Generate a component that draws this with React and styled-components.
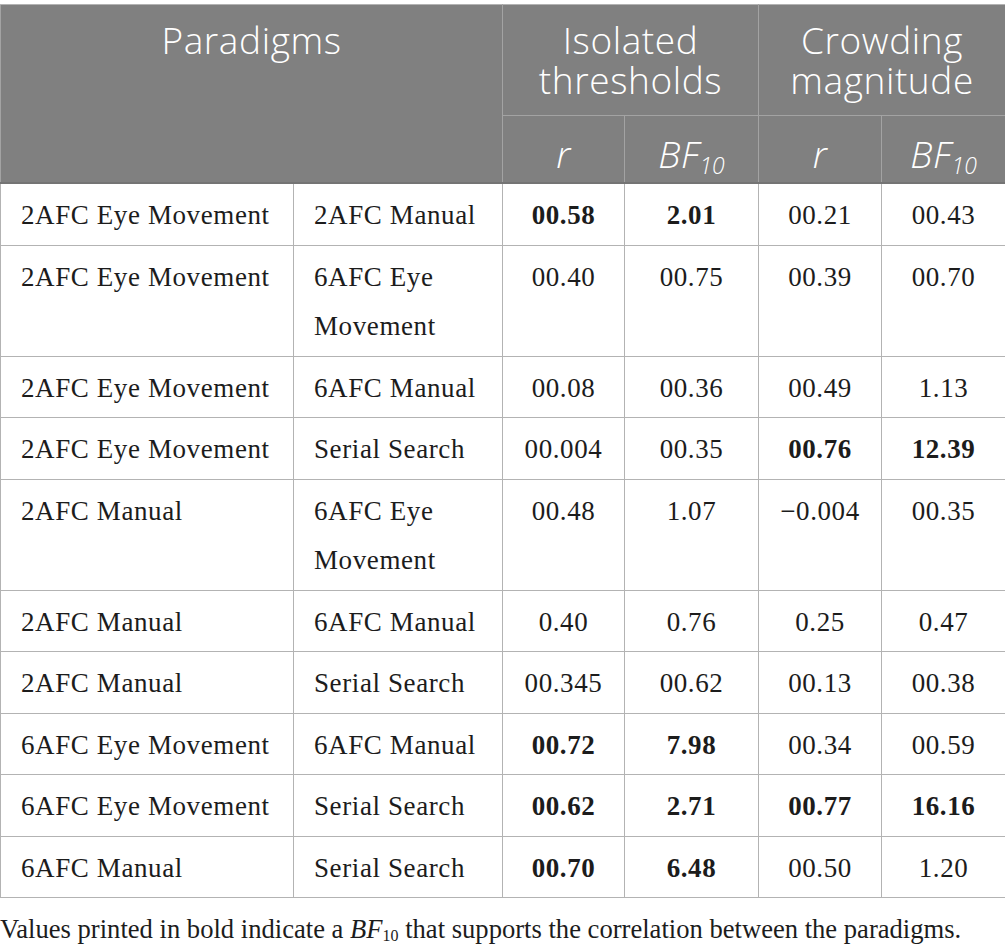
import React from "react";
import styled, { createGlobalStyle } from "styled-components";

const Global = createGlobalStyle`
  html, body { margin: 0; padding: 0; background: #ffffff; }
  body { font-family: "Liberation Serif", "Times New Roman", serif; color: #1c1c1c; }
`;

const Page = styled.div`
  padding-top: 4px;
  width: 1005px;
`;

const Table = styled.table`
  border-collapse: collapse;
  table-layout: fixed;
  width: 1005px;
  border: 1px solid #b3b3b3;
`;

const HeadCell = styled.th`
  background: #808080;
  color: #ffffff;
  font-family: "Open Sans", "Noto Sans", sans-serif;
  font-weight: 300;
  font-size: 37px;
  letter-spacing: 0.6px;
  line-height: 40px;
  text-align: center;
  vertical-align: top;
  padding: ${(p) => (p.$sub ? "18px 6px 8px" : "15px 6px 15px")};
  border: 1px solid #a3a3a3;
  border-top-color: #b3b3b3;
  font-style: ${(p) => (p.$sub ? "italic" : "normal")};
  border-bottom: ${(p) => (p.$last ? "2px solid #747474" : "1px solid #a3a3a3")};
`;

const Sub = styled.sub`
  font-size: 0.62em;
  vertical-align: baseline;
  position: relative;
  top: 0.28em;
  line-height: 0;
  letter-spacing: 0;
`;

const Cell = styled.td`
  font-size: 27px;
  letter-spacing: 0.6px;
  line-height: 49.5px;
  padding: 7px 20px 4px;
  vertical-align: top;
  text-align: ${(p) => (p.$num ? "center" : "left")};
  font-weight: ${(p) => (p.$bold ? 700 : 400)};
  border: 1px solid #b3b3b3;
  ${(p) => (p.$num ? "padding-left: 4px; padding-right: 4px;" : "")}
`;

const Note = styled.p`
  margin: 11px 0 0;
  font-size: 26.6px;
  line-height: 40px;
  color: #1c1c1c;
`;

const NoteSub = styled.sub`
  font-size: 0.6em;
  vertical-align: baseline;
  position: relative;
  top: 0.2em;
  line-height: 0;
`;

const rows = [
  ["2AFC Eye Movement", "2AFC Manual", ["00.58", true], ["2.01", true], ["00.21"], ["00.43"]],
  ["2AFC Eye Movement", "6AFC Eye Movement", ["00.40"], ["00.75"], ["00.39"], ["00.70"]],
  ["2AFC Eye Movement", "6AFC Manual", ["00.08"], ["00.36"], ["00.49"], ["1.13"]],
  ["2AFC Eye Movement", "Serial Search", ["00.004"], ["00.35"], ["00.76", true], ["12.39", true]],
  ["2AFC Manual", "6AFC Eye Movement", ["00.48"], ["1.07"], ["\u22120.004"], ["00.35"]],
  ["2AFC Manual", "6AFC Manual", ["0.40"], ["0.76"], ["0.25"], ["0.47"]],
  ["2AFC Manual", "Serial Search", ["00.345"], ["00.62"], ["00.13"], ["00.38"]],
  ["6AFC Eye Movement", "6AFC Manual", ["00.72", true], ["7.98", true], ["00.34"], ["00.59"]],
  ["6AFC Eye Movement", "Serial Search", ["00.62", true], ["2.71", true], ["00.77", true], ["16.16", true]],
  ["6AFC Manual", "Serial Search", ["00.70", true], ["6.48", true], ["00.50"], ["1.20"]],
];

const widths = [293, 209, 122, 134, 123, 124];

export default function App() {
  return (
    <Page>
      <Global />
      <Table>
        <colgroup>
          {widths.map((w, i) => (
            <col key={i} style={{ width: w }} />
          ))}
        </colgroup>
        <thead>
          <tr>
            <HeadCell colSpan={2} rowSpan={2} $last>
              Paradigms
            </HeadCell>
            <HeadCell colSpan={2}>Isolated thresholds</HeadCell>
            <HeadCell colSpan={2}>Crowding magnitude</HeadCell>
          </tr>
          <tr>
            <HeadCell $sub $last>r</HeadCell>
            <HeadCell $sub $last>
              BF<Sub>10</Sub>
            </HeadCell>
            <HeadCell $sub $last>r</HeadCell>
            <HeadCell $sub $last>
              BF<Sub>10</Sub>
            </HeadCell>
          </tr>
        </thead>
        <tbody>
          {rows.map((r, i) => (
            <tr key={i}>
              <Cell>{r[0]}</Cell>
              <Cell>{r[1]}</Cell>
              {r.slice(2).map((v, j) => (
                <Cell key={j} $num $bold={!!v[1]}>
                  {v[0]}
                </Cell>
              ))}
            </tr>
          ))}
        </tbody>
      </Table>
      <Note>
        Values printed in bold indicate a <i>BF</i>
        <NoteSub>10</NoteSub> that supports the correlation between the paradigms.
      </Note>
    </Page>
  );
}
